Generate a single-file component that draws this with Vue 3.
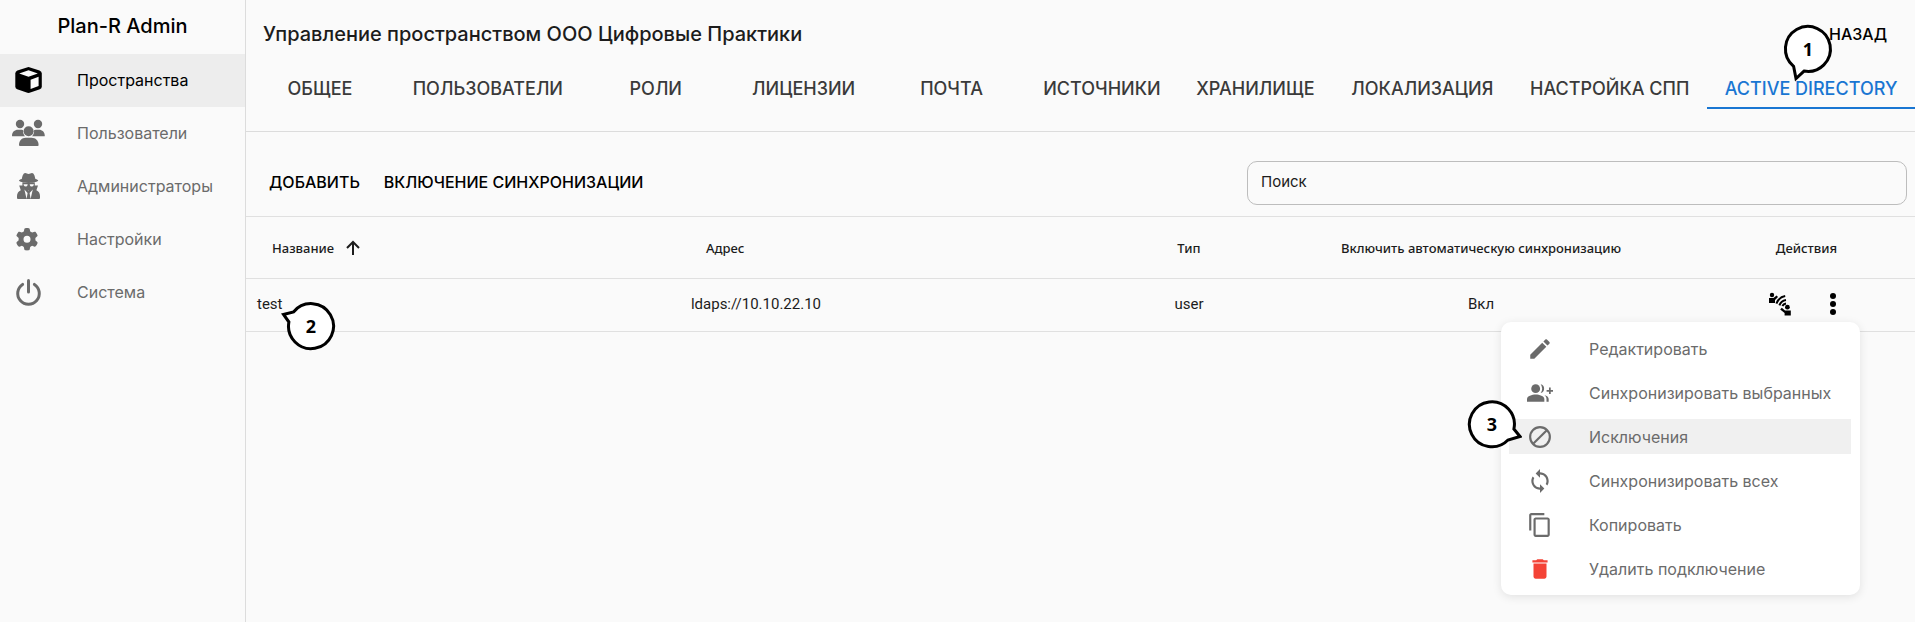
<script setup>
import { ref } from 'vue'

const search = ref('')

const sections = [
  { icon: 'cube', label: 'Пространства', active: true },
  { icon: 'users', label: 'Пользователи' },
  { icon: 'agent', label: 'Администраторы' },
  { icon: 'gear', label: 'Настройки' },
  { icon: 'power', label: 'Система' },
]

const tabs = [
  'Общее', 'Пользователи', 'Роли', 'Лицензии', 'Почта', 'Источники',
  'Хранилище', 'Локализация', 'Настройка СПП', 'Active Directory',
]
const activeTab = 'Active Directory'

const rows = [{ name: 'test', address: 'ldaps://10.10.22.10', type: 'user', auto: 'Вкл' }]

const menu = [
  { icon: 'edit', label: 'Редактировать' },
  { icon: 'groupAdd', label: 'Синхронизировать выбранных' },
  { icon: 'block', label: 'Исключения', hover: true },
  { icon: 'sync', label: 'Синхронизировать всех' },
  { icon: 'copy', label: 'Копировать' },
  { icon: 'trash', label: 'Удалить подключение', danger: true },
]
</script>

<template>
  <div class="app">
    <aside class="sidebar">
      <h1 class="brand">Plan-R Admin</h1>
      <nav>
        <a v-for="s in sections" :key="s.icon" href="#" class="section" :class="{ active: s.active }">
          <svg class="section-icon" viewBox="0 0 34 28" aria-hidden="true">
            <g v-if="s.icon === 'cube'">
              <path d="M17.5 1 L28.5 4.6 Q30.8 5.4 30.8 7.6 V20.4 Q30.8 22.4 28.9 23.2 L18.6 26.8 Q17.5 27.1 16.4 26.8 L6.2 23.2 Q4.3 22.4 4.3 20.4 V7.6 Q4.3 5.4 6.4 4.6 Z" />
              <path class="cut" d="M17.5 4.2 L26.8 7.4 L17.5 10.8 L8.2 7.4 Z M19.6 13.8 L27.6 10.8 V19.9 L19.6 23.1 Z" />
            </g>
            <g v-else-if="s.icon === 'users'">
              <circle cx="9" cy="5" r="4.2" />
              <circle cx="27" cy="5" r="4.2" />
              <path d="M1 17 C1 13 3.6 10.8 7 10.8 H10.8 C11.3 10.8 11.8 11 12.2 11.2 C11.8 13.6 12.6 15.8 14 17.2 H2 Q1 17.2 1 17 Z" />
              <path d="M33.8 17 C33.8 13 31.2 10.8 28 10.8 H24.6 C24 10.8 23.4 11 23 11.2 C23.4 13.6 22.6 15.8 21 17.2 H33 Q33.8 17.2 33.8 17 Z" />
              <circle cx="17.6" cy="12.2" r="5" />
              <path d="M8 26 C8 21.6 11 18.8 14.6 18.8 H20.6 C24.4 18.8 27.6 21.6 27.6 26 Q27.6 27 26.6 27 H9 Q8 27 8 26 Z" />
            </g>
            <g v-else-if="s.icon === 'agent'">
              <path d="M10.8 7 C11.4 4.2 12.2 1 14.2 1 C15.6 1 16.2 1.9 17.6 1.9 C19 1.9 19.6 1 21 1 C23 1 23.8 4.2 24.4 7 C26 7.4 27.2 8 27.2 8.6 C27.2 9.6 23 11 17.6 11 C12.2 11 8 9.6 8 8.6 C8 8 9.2 7.4 10.8 7 Z" />
              <path d="M11.4 10.4 H23.8 V13 C23.8 15.6 21 18.2 17.6 18.2 C14.2 18.2 11.4 15.6 11.4 13 Z" />
              <path d="M8.2 13.6 H12 L17.6 18.6 L23.2 13.6 H27 L25.4 18.2 C27.8 19.2 29 21.4 29 24 V26 Q29 27 28 27 H7 Q6 27 6 26 V24 C6 21.4 7.4 19.2 9.8 18.2 Z" />
              <path class="cut" d="M12.6 12.3 H16.6 V13 Q16.2 14.6 14.8 14.6 Q13.2 14.6 12.6 13 Z M18.8 12.3 H22.8 V13 Q22.2 14.6 20.6 14.6 Q19.2 14.6 18.8 13 Z M13.4 17.6 L16.6 21 L15.6 27 Z M21.8 17.6 L18.6 21 L19.6 27 Z" />
            </g>
            <g v-else-if="s.icon === 'gear'" transform="translate(4.8 3) scale(0.0438)">
              <path d="M495.9 166.6c3.2 8.7 .5 18.4-6.4 24.6l-43.3 39.4c1.1 8.3 1.7 16.8 1.7 25.4s-.6 17.1-1.7 25.4l43.3 39.4c6.9 6.2 9.6 15.9 6.4 24.6c-4.4 11.9-9.7 23.3-15.8 34.3l-4.7 8.1c-6.6 11-14 21.4-22.1 31.2c-5.9 7.2-15.7 9.6-24.5 6.8l-55.7-17.7c-13.4 10.3-28.2 18.9-44 25.4l-12.5 57.1c-2 9.1-9 16.3-18.2 17.8c-13.8 2.3-28 3.5-42.5 3.5s-28.7-1.2-42.5-3.5c-9.2-1.5-16.2-8.7-18.2-17.8l-12.5-57.1c-15.8-6.5-30.6-15.1-44-25.4L83.1 425.9c-8.8 2.8-18.6 .3-24.5-6.8c-8.1-9.8-15.5-20.2-22.1-31.2l-4.7-8.1c-6.1-11-11.4-22.4-15.8-34.3c-3.2-8.7-.5-18.4 6.4-24.6l43.3-39.4C64.6 273.1 64 264.6 64 256s.6-17.1 1.7-25.4L22.4 191.2c-6.9-6.2-9.6-15.9-6.4-24.6c4.4-11.9 9.7-23.3 15.8-34.3l4.7-8.1c6.6-11 14-21.4 22.1-31.2c5.9-7.2 15.7-9.6 24.5-6.8l55.7 17.7c13.4-10.3 28.2-18.9 44-25.4l12.5-57.1c2-9.1 9-16.3 18.2-17.8C227.3 1.2 241.5 0 256 0s28.7 1.2 42.5 3.5c9.2 1.5 16.2 8.7 18.2 17.8l12.5 57.1c15.8 6.5 30.6 15.1 44 25.4l55.7-17.7c8.8-2.8 18.6-.3 24.5 6.8c8.1 9.8 15.5 20.2 22.1 31.2l4.7 8.1c6.1 11 11.4 22.4 15.8 34.3zM256 336a80 80 0 1 0 0-160 80 80 0 1 0 0 160z" />
            </g>
            <g v-else class="line">
              <path d="M11.6 6.4 A10.8 10.8 0 1 0 23.4 6.4" />
              <path d="M17.5 2.4 V14" />
            </g>
          </svg>
          <span>{{ s.label }}</span>
        </a>
      </nav>
    </aside>

    <main class="main">
      <header class="header">
        <div class="title-row">
          <h2 class="title">Управление пространством ООО Цифровые Практики</h2>
          <button type="button" class="text-btn">Назад</button>
        </div>
        <div class="tabs" role="tablist">
          <button
            v-for="t in tabs" :key="t" type="button" role="tab" class="tab"
            :class="{ active: t === activeTab }" :aria-selected="t === activeTab"
          >{{ t }}</button>
        </div>
        <div class="badge badge-one">
          <svg viewBox="0 0 60 64" aria-hidden="true"><path d="M15.6 47.3 A22.5 22.5 0 1 1 26 52.1 L18 59.5 Z" /></svg>
          <span>1</span>
        </div>
      </header>

      <div class="toolbar">
        <button type="button" class="text-btn">Добавить</button>
        <button type="button" class="text-btn">Включение синхронизации</button>
        <input v-model="search" class="search" type="search" placeholder="Поиск" aria-label="Поиск" />
      </div>

      <table class="table">
        <thead>
          <tr>
            <th class="c-name left">
              <span class="sort">Название
                <svg viewBox="0 0 18 18" aria-hidden="true"><path d="M9 16 V3 M3 9 L9 3 L15 9" /></svg>
              </span>
            </th>
            <th class="c-address left">Адрес</th>
            <th class="c-type">Тип</th>
            <th class="c-auto">Включить автоматическую синхронизацию</th>
            <th class="c-actions">Действия</th>
          </tr>
        </thead>
        <tbody>
          <tr v-for="r in rows" :key="r.name">
            <td class="left anchor">{{ r.name }}
              <div class="badge badge-two">
                <svg viewBox="0 0 60 60" aria-hidden="true"><path d="M7.9 26 L2.5 18.5 L12.5 16 A22.5 22.5 0 1 1 7.9 26 Z" /></svg>
                <span>2</span>
              </div>
            </td>
            <td class="left">{{ r.address }}</td>
            <td>{{ r.type }}</td>
            <td>{{ r.auto }}</td>
            <td class="anchor">
              <div class="actions">
                <button type="button" class="icon-btn" aria-label="Синхронизация">
                  <svg viewBox="0 0 24 24" aria-hidden="true">
                    <circle cx="4" cy="3" r="2.2" />
                    <path d="M1 6 H5.4 L8.6 3.4 L10 5 L7 8 V11 H1 Z" />
                    <circle cx="19.4" cy="15.2" r="2.4" />
                    <path d="M12.2 17.4 L13.8 15.8 L17 18.6 H22.8 V23.4 H16.6 V21 Z" />
                    <g class="wave"><path d="M8.4 11.6 Q11 5 17.2 4" /><path d="M11.4 13.4 Q13 8.8 18 8" /><path d="M14.4 14 Q15.4 11.8 18 11.4" /></g>
                  </svg>
                </button>
                <button type="button" class="icon-btn" aria-label="Меню">
                  <svg viewBox="0 0 24 24" aria-hidden="true"><circle cx="12" cy="4" r="3" /><circle cx="12" cy="12" r="3" /><circle cx="12" cy="20" r="3" /></svg>
                </button>
              </div>
              <div class="menu" role="menu">
                <button
                  v-for="m in menu" :key="m.icon" type="button" role="menuitem" class="item"
                  :class="{ hover: m.hover, danger: m.danger }"
                >
                  <svg viewBox="0 0 24 24" aria-hidden="true">
                    <path v-if="m.icon === 'edit'" d="M3 17.25V21h3.75L17.81 9.94l-3.75-3.75L3 17.25zM20.71 7.04c.39-.39.39-1.02 0-1.41l-2.34-2.34c-.39-.39-1.02-.39-1.41 0l-1.83 1.83 3.75 3.75 1.83-1.83z" />
                    <template v-else-if="m.icon === 'groupAdd'">
                      <circle cx="8" cy="8" r="4.1" />
                      <path d="M0 20 V17.6 C0 14.8 4.6 13.4 8 13.4 C11.4 13.4 16 14.8 16 17.6 V20 Z" />
                      <path d="M12.6 4 A4.1 4.1 0 0 1 12.6 12 Q14 10.2 14 8 Q14 5.8 12.6 4 Z M16 13.9 C18.4 14.5 20 15.8 20 17.6 V20 H18 V17.6 C18 16.1 17.2 14.8 16 13.9 Z" />
                      <path d="M20.3 7 H21.9 V9.2 H24 V10.8 H21.9 V13 H20.3 V10.8 H18.1 V9.2 H20.3 Z" />
                    </template>
                    <g v-else-if="m.icon === 'block'" class="ring"><circle cx="12" cy="12" r="9.1" /><path d="M5.7 18.3 L18.3 5.7" /></g>
                    <path v-else-if="m.icon === 'sync'" d="M12 4V1L8 5l4 4V6c3.31 0 6 2.69 6 6 0 1.01-.25 1.97-.7 2.8l1.46 1.46C19.54 15.03 20 13.57 20 12c0-4.42-3.58-8-8-8zm0 14c-3.31 0-6-2.69-6-6 0-1.01.25-1.97.7-2.8L5.24 7.74C4.46 8.97 4 10.43 4 12c0 4.42 3.58 8 8 8v3l4-4-4-4v3z" />
                    <path v-else-if="m.icon === 'copy'" d="M16 1H4c-1.1 0-2 .9-2 2v14h2V3h12V1zm3 4H8c-1.1 0-2 .9-2 2v14c0 1.1.9 2 2 2h11c1.1 0 2-.9 2-2V7c0-1.1-.9-2-2-2zm0 16H8V7h11v14z" />
                    <path v-else d="M6 19c0 1.1.9 2 2 2h8c1.1 0 2-.9 2-2V7H6v12zM19 4h-3.5l-1-1h-5l-1 1H5v2h14V4z" />
                  </svg>
                  <span>{{ m.label }}</span>
                </button>
                <div class="badge badge-three">
                  <svg viewBox="0 0 60 60" aria-hidden="true"><path d="M51.9 35 L58 42.5 L46 46 A22.5 22.5 0 1 1 51.9 35 Z" /></svg>
                  <span>3</span>
                </div>
              </div>
            </td>
          </tr>
        </tbody>
      </table>
    </main>
  </div>
</template>

<style>
body {
  background: #fafafa;
}
</style>

<style scoped>
.app {
  display: flex;
  min-height: 100vh;
  background: #fafafa;
  color: #1c1c1c;
  font-family: Inter, "Open Sans", sans-serif;
}
.app *,
.app {
  box-sizing: border-box;
}
button {
  border: 0;
  margin: 0;
  padding: 0;
  background: none;
  color: inherit;
  font-family: inherit;
  cursor: pointer;
}
.sidebar {
  flex: 0 0 246px;
  border-right: 1px solid #dcdcdc;
}
.brand {
  margin: 0;
  height: 54px;
  line-height: 52px;
  text-align: center;
  font-size: 20px;
  font-weight: 500;
  color: #000;
}
.section {
  display: flex;
  align-items: center;
  gap: 32px;
  height: 53px;
  padding: 0 0 2px 11px;
  color: #6b6b6b;
  font-size: 16px;
  text-decoration: none;
}
.section.active {
  background: #ededed;
  color: #000;
}
.section-icon {
  width: 34px;
  height: 28px;
  fill: currentColor;
}
.cut {
  fill: #fafafa;
}
.line {
  fill: none;
  stroke: currentColor;
  stroke-width: 3;
  stroke-linecap: round;
}
.main {
  flex: 1;
  min-width: 0;
}
.header {
  position: relative;
  height: 132px;
  border-bottom: 1px solid #dcdcdc;
}
.title-row {
  display: flex;
  justify-content: space-between;
  align-items: center;
  height: 68px;
  padding: 0 28px 0 17px;
}
.title {
  margin: 0;
  font-size: 20px;
  font-weight: 500;
}
.text-btn {
  color: #000;
  font-size: 16px;
  font-weight: 500;
  text-transform: uppercase;
}
.tabs {
  display: grid;
  grid-template-columns: 148fr 188fr 148fr 148fr 148fr 153fr 154fr 180fr 195fr 208fr;
}
.tab {
  height: 41px;
  padding-top: 2px;
  border-bottom: 2px solid transparent;
  color: #3a3a3a;
  font-size: 18px;
  font-weight: 500;
  text-transform: uppercase;
  white-space: nowrap;
}
.tab.active {
  border-color: #1976d2;
  color: #1976d2;
}
.toolbar {
  display: flex;
  align-items: center;
  gap: 24px;
  height: 84px;
  padding: 17px 8px 0 23px;
}
.toolbar .text-btn {
  padding-bottom: 2px;
}
.search {
  width: 660px;
  height: 44px;
  margin: 0 0 0 auto;
  padding: 0 13px 2px;
  border: 1px solid #bdbdbd;
  border-radius: 10px;
  background: transparent;
  font-family: inherit;
  font-size: 15px;
  color: #1c1c1c;
}
.search::placeholder {
  color: #1c1c1c;
  opacity: 1;
}
.table {
  width: 100%;
  table-layout: fixed;
  border-collapse: collapse;
  border-top: 1px solid #e0e0e0;
  text-align: center;
}
th {
  height: 62px;
  padding: 0 10px;
  border-bottom: 1px solid #e0e0e0;
  font-family: "Noto Sans", sans-serif;
  font-size: 13px;
  font-weight: 500;
}
td {
  height: 53px;
  padding: 0 11px 2px;
  border-bottom: 1px solid #e0e0e0;
  font-family: Roboto, sans-serif;
  font-size: 15px;
}
.left {
  text-align: left;
}
th.left {
  padding-left: 26px;
}
.c-name,
.c-address {
  width: 26%;
}
.c-type {
  width: 9%;
}
.c-auto {
  width: 26%;
}
.c-actions {
  width: 13%;
}
.sort {
  display: flex;
  align-items: center;
  gap: 10px;
}
.sort svg {
  width: 18px;
  height: 18px;
  fill: none;
  stroke: #1c1c1c;
  stroke-width: 2;
}
.anchor {
  position: relative;
}
.actions {
  display: flex;
  justify-content: center;
  gap: 29px;
}
.icon-btn {
  display: flex;
  color: #000;
}
.icon-btn svg {
  width: 24px;
  height: 24px;
  fill: currentColor;
}
.wave {
  fill: none;
  stroke: currentColor;
  stroke-width: 2;
}
.menu {
  position: absolute;
  top: 43px;
  right: 55px;
  width: 359px;
  padding: 9px 9px 9px 8px;
  border-radius: 10px;
  background: #fff;
  box-shadow: 0 2px 10px rgba(0, 0, 0, 0.1);
  display: grid;
  gap: 9px;
}
.item {
  display: flex;
  align-items: center;
  gap: 36px;
  height: 35px;
  padding-left: 18px;
  color: #6b6b6b;
  font-family: Inter, sans-serif;
  font-size: 16px;
  white-space: nowrap;
}
.item.hover {
  background: #f0f0f0;
}
.item svg {
  width: 26px;
  height: 26px;
  fill: currentColor;
}
.item.danger svg {
  color: #f44336;
}
.ring {
  fill: none;
  stroke: currentColor;
  stroke-width: 2;
}
.badge {
  position: absolute;
  width: 60px;
  height: 60px;
}
.badge svg {
  display: block;
  width: 100%;
  height: 100%;
  fill: #fff;
  stroke: #000;
  stroke-width: 3;
}
.badge span {
  position: absolute;
  inset: 0;
  display: grid;
  place-items: center;
  color: #000;
  font-family: "Open Sans", sans-serif;
  font-size: 18px;
  font-weight: 700;
}
.badge-one {
  top: 19px;
  right: 77px;
  height: 64px;
}
.badge-one span {
  bottom: 4px;
}
.badge-two {
  top: 17px;
  left: 35px;
}
.badge-three {
  top: 72px;
  left: -39px;
}
</style>
